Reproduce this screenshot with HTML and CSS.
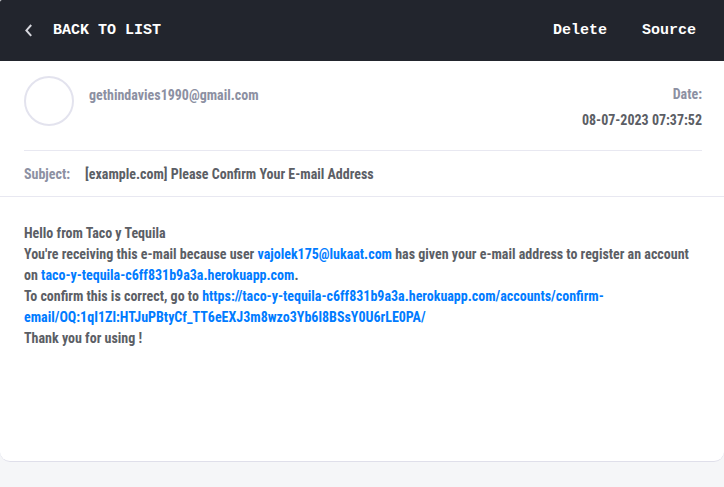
FILE: index.html
```html
<!DOCTYPE html>
<html lang="en">
<head>
<meta charset="utf-8">
<meta name="viewport" content="width=device-width, initial-scale=1">
<title>Please Confirm Your E-mail Address</title>
<link rel="stylesheet" href="styles.css">
</head>
<body>
<main class="mail">
  <header class="toolbar">
    <a class="back" href="#">
      <svg class="back-icon" viewBox="0 0 9 14" aria-hidden="true"><path d="M7.2 1 2.4 6.4l4.8 5.4"/></svg>
      <span>BACK TO LIST</span>
    </a>
    <div class="actions">
      <button type="button">Delete</button>
      <button type="button">Source</button>
    </div>
  </header>
  <section class="sender">
    <div class="avatar"></div>
    <div class="address">gethindavies1990@gmail.com</div>
    <div class="date"><span class="label">Date:</span><time>08-07-2023 07:37:52</time></div>
  </section>
  <section class="subject">
    <span class="label">Subject:</span>
    <span>[example.com] Please Confirm Your E-mail Address</span>
  </section>
  <article class="message">
    <p>Hello from Taco y Tequila</p>
    <p>You're receiving this e-mail because user <a href="#">vajolek175@lukaat.com</a> has given your e-mail address to register an account on <a href="#">taco-y-tequila-c6ff831b9a3a.herokuapp.com</a>.</p>
    <p>To confirm this is correct, go to <a href="#">https://taco-y-tequila-c6ff831b9a3a.herokuapp.com/accounts/confirm-email/OQ:1qI1Zl:HTJuPBtyCf_TT6eEXJ3m8wzo3Yb6l8BSsY0U6rLE0PA/</a></p>
    <p>Thank you for using !</p>
  </article>
</main>
</body>
</html>
```
FILE: styles.css
```css
* {
  box-sizing: border-box;
}

body {
  margin: 0;
  background: #f5f6f8;
  color: #5b5e65;
  font: 700 14px/21px "Roboto Condensed", Roboto, sans-serif;
}

.mail {
  min-height: calc(100vh - 25px);
  background: #fff;
  border-bottom: 1px solid #dfdfea;
  border-radius: 2px 0 10px 10px;
  overflow: hidden;
}

.toolbar {
  display: flex;
  align-items: center;
  justify-content: space-between;
  padding: 20px 28px 20px 24px;
  background: #22252d;
}

.back,
.actions button {
  color: #fff;
  font: 700 15px/21px Consolas, "Liberation Mono", monospace;
  text-decoration: none;
}

.back {
  display: flex;
  align-items: center;
  gap: 20px;
}

.back-icon {
  width: 9px;
  height: 14px;
  fill: none;
  stroke: #d5d6dc;
  stroke-width: 2;
}

.actions {
  display: flex;
  gap: 35px;
}

.actions button {
  padding: 0;
  border: 0;
  background: none;
}

.sender {
  display: flex;
  align-items: flex-start;
  gap: 15px;
  margin: 0 22px 0 24px;
  padding: 15px 0 19px;
  border-bottom: 1px solid #e8e8f1;
}

.avatar {
  width: 50px;
  height: 50px;
  border: 2px solid #e3e3ee;
  border-radius: 50%;
}

.address,
.label {
  color: #8c90a2;
}

.address {
  padding-top: 9px;
}

.date {
  display: flex;
  flex-direction: column;
  gap: 5px;
  margin-left: auto;
  padding-top: 8px;
  text-align: right;
}

.subject {
  display: flex;
  gap: 15px;
  padding: 13px 24px 11px;
  border-bottom: 1px solid #e8e8f1;
}

.message {
  padding: 26px 24px 24px;
}

.message p {
  margin: 0;
}

.message a {
  color: #007bff;
  text-decoration: none;
}
```
